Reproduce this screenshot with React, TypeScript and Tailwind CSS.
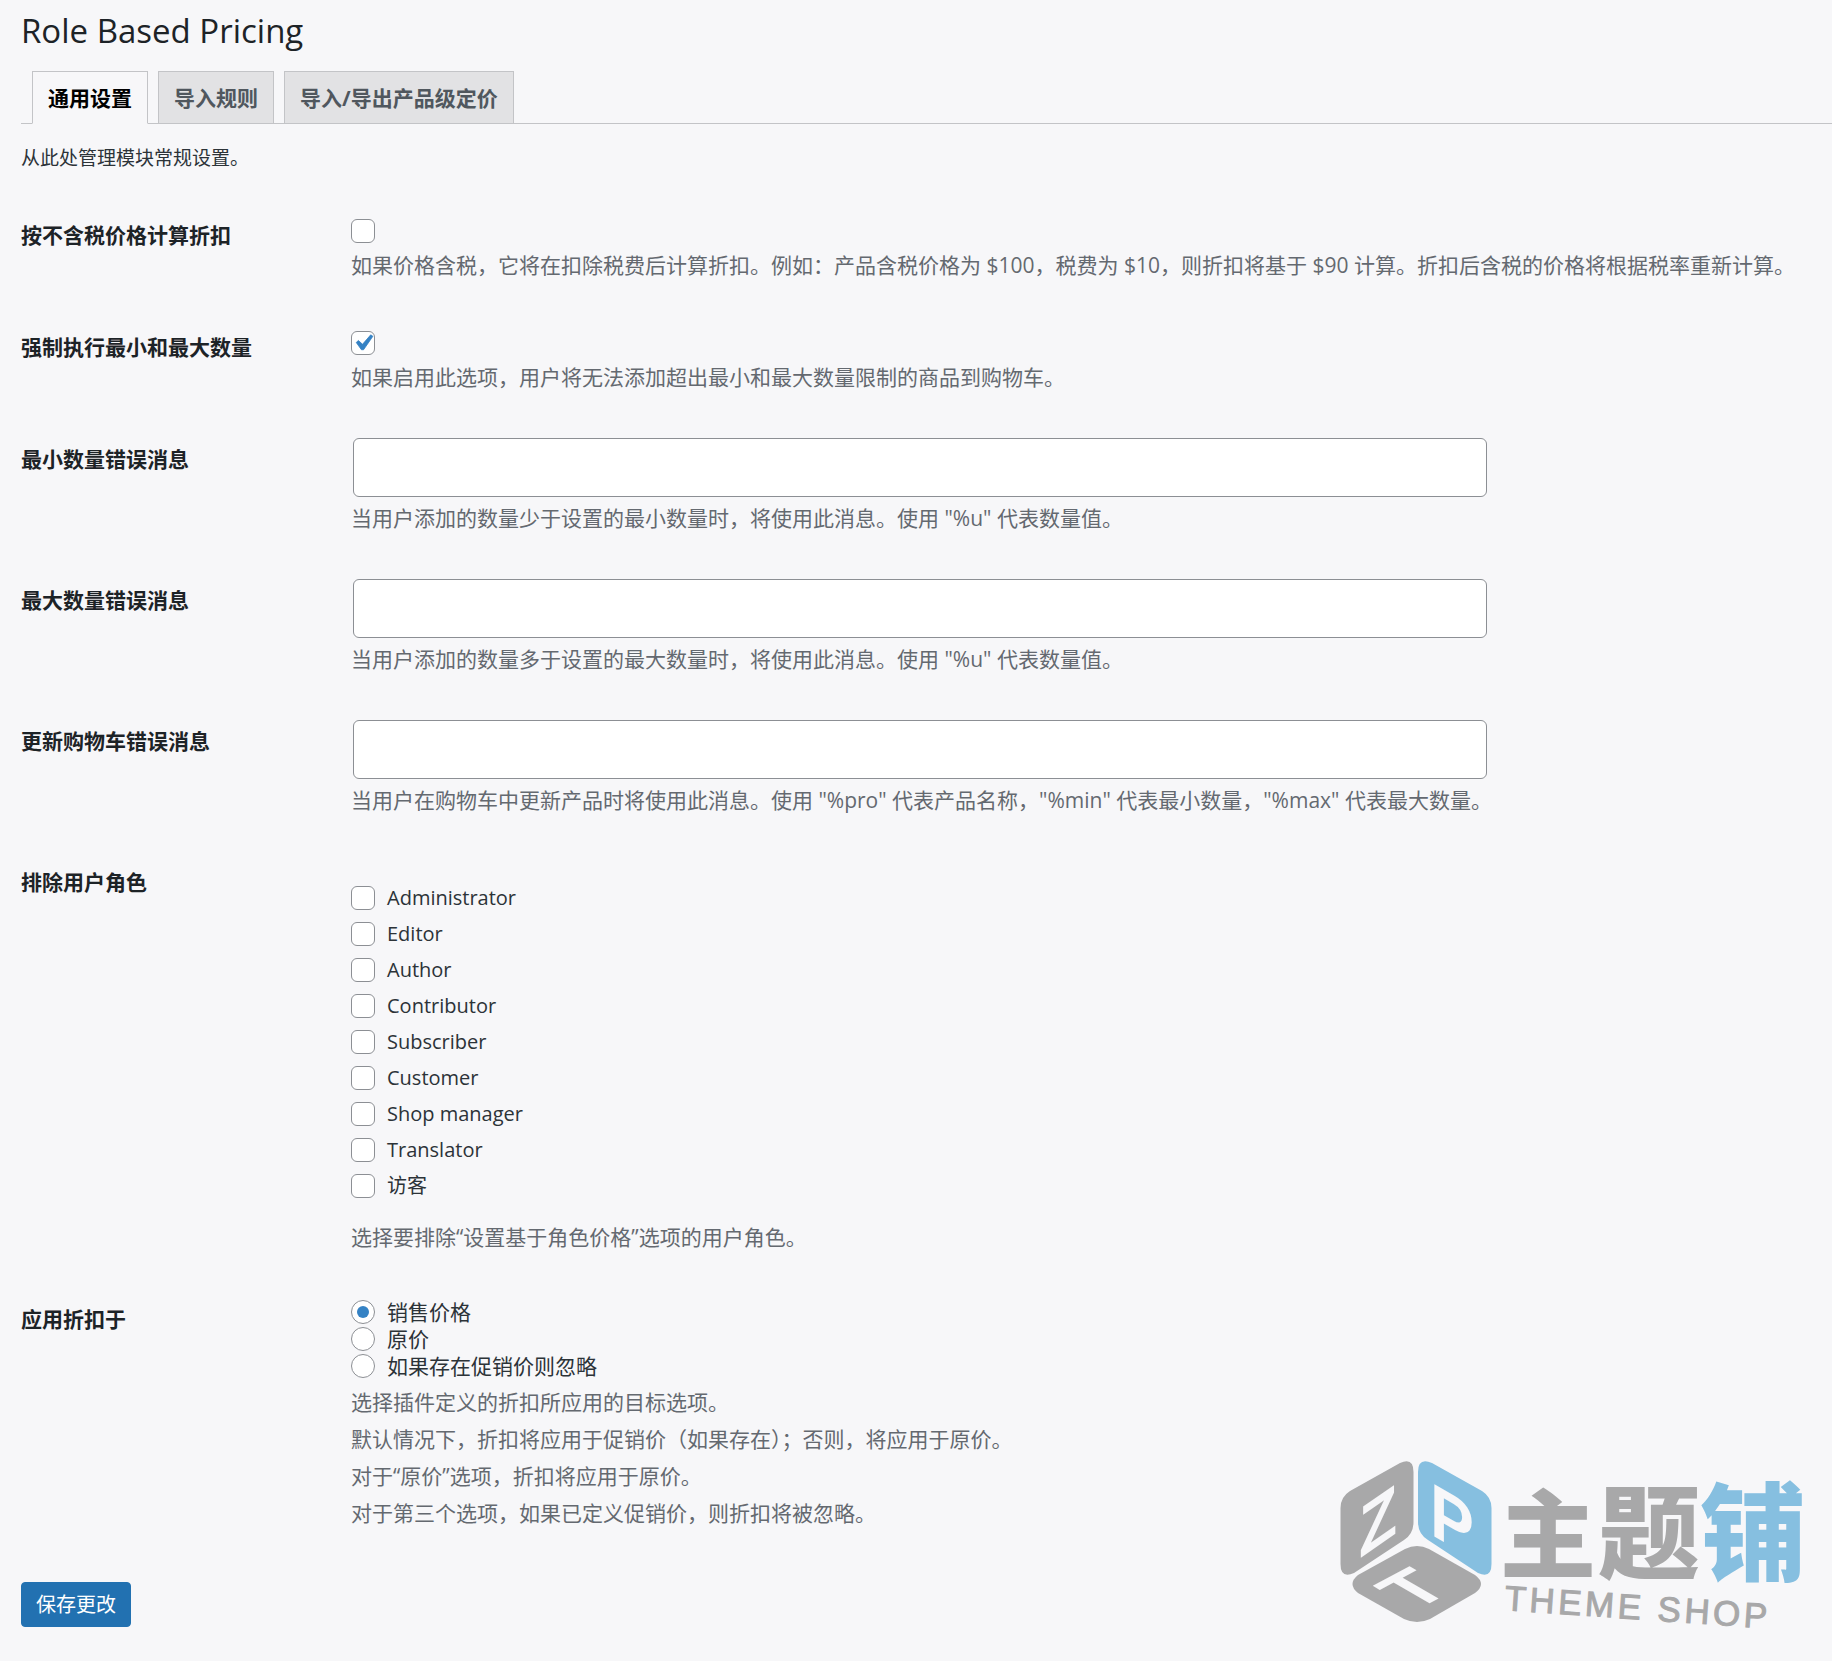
import { useState, type ReactNode } from 'react';

const tabs = ['通用设置', '导入规则', '导入/导出产品级定价'];

const roles = [
  'Administrator',
  'Editor',
  'Author',
  'Contributor',
  'Subscriber',
  'Customer',
  'Shop manager',
  'Translator',
  '访客',
];

const priceOptions = ['销售价格', '原价', '如果存在促销价则忽略'];

const messages = [
  {
    id: 'min-qty-message',
    label: '最小数量错误消息',
    help: '当用户添加的数量少于设置的最小数量时，将使用此消息。使用 "%u" 代表数量值。',
  },
  {
    id: 'max-qty-message',
    label: '最大数量错误消息',
    help: '当用户添加的数量多于设置的最大数量时，将使用此消息。使用 "%u" 代表数量值。',
  },
  {
    id: 'update-cart-message',
    label: '更新购物车错误消息',
    help: '当用户在购物车中更新产品时将使用此消息。使用 "%pro" 代表产品名称，"%min" 代表最小数量，"%max" 代表最大数量。',
  },
];

function Checkbox({ id, defaultChecked = false }: { id: string; defaultChecked?: boolean }) {
  return (
    <span className="relative block size-6 shrink-0">
      <input
        id={id}
        type="checkbox"
        defaultChecked={defaultChecked}
        className="peer block size-6 appearance-none rounded-md border border-[#8c8f94] bg-white"
      />
      <svg
        viewBox="0 0 20 20"
        className="pointer-events-none absolute -top-1 -left-1 hidden size-8 fill-[#3582c4] stroke-[#3582c4] peer-checked:block"
        strokeWidth="0.5"
      >
        <path d="M14.83 4.89l1.34.94-5.81 8.38H9.02L5.78 9.67l1.34-1.25 2.57 2.4z" />
      </svg>
    </span>
  );
}

function Help({ children }: { children: ReactNode }) {
  return <p className="text-[21px] leading-8 text-[#646970]">{children}</p>;
}

function Heading({ children }: { children: ReactNode }) {
  return <span className="block pt-[30px] text-[21px] leading-[27px] font-bold text-[#1d2327]">{children}</span>;
}

function Row({ label, htmlFor, children }: { label: string; htmlFor: string; children: ReactNode }) {
  return (
    <div className="grid grid-cols-[330px_1fr]">
      <label htmlFor={htmlFor}>
        <Heading>{label}</Heading>
      </label>
      <div>{children}</div>
    </div>
  );
}

function Watermark() {
  return (
    <svg
      viewBox="0 0 532 231"
      className="pointer-events-none absolute right-0 bottom-0 h-[231px] w-[532px] fill-[#a8a8a9]"
    >
      {/* Cube faces */}
      <path d="M100 33 Q113.500 27 113.500 42 V92 Q113.500 104 104 110 L54 143 Q40.500 149 40.500 134 V78 Q40.500 67 50 61 Z" />
      <path
        className="fill-[#86bfe0]"
        d="M132 33 Q118 27 118 42 V92 Q118 104 128 110 L178 143 Q191.500 149 191.500 134 V78 Q191.500 67 182 61 Z"
      />
      <path d="M105 119 Q117 113 129 119 L175 145 Q187 154 175 163 L130 189 Q117 195 104 189 L58 163 Q47 154 58 145 Z" />
      <g className="fill-[#f7f7f9] font-bold" fontFamily="Liberation Sans, sans-serif">
        <text fontSize="72" transform="matrix(0.866 -0.6 0 1 59 129)">Z</text>
        <text fontSize="76" transform="matrix(0.866 0.5 0 1 130 104)">P</text>
        <text fontSize="72" transform="matrix(0.866 -0.46 0.866 0.5 115 181)">T</text>
      </g>
      {/* Wordmark */}
      <g className="font-black" fontFamily="Noto Sans CJK SC, sans-serif">
        <text x="200" y="140" fontSize="96">主</text>
        <text x="298" y="141" fontSize="102">题</text>
        <text x="400" y="142" fontSize="106" className="fill-[#86bfe0]">铺</text>
      </g>
      <text
        fontSize="35"
        fontFamily="Liberation Sans, sans-serif"
        className="stroke-[#a8a8a9] tracking-widest"
        transform="translate(204 180) rotate(4)"
      >
        THEME SHOP
      </text>
    </svg>
  );
}

export default function App() {
  const [activeTab, setActiveTab] = useState(0);

  return (
    <main className="relative min-h-screen bg-[#f7f7f9] pb-[34px] pl-[21px] font-['Open_Sans','Noto_Sans_CJK_SC',sans-serif] text-[#2c3338]">
      <h1 className="pt-2 text-[33px] leading-[46px] text-[#1d2327]">Role Based Pricing</h1>

      {/* Tabs */}
      <nav className="mt-[17px] flex gap-[10px] border-b border-[#c3c4c7] pl-[11px]">
        {tabs.map((tab, i) => (
          <button
            key={tab}
            type="button"
            onClick={() => setActiveTab(i)}
            className={
              i === activeTab
                ? '-mb-px border border-[#c3c4c7] border-b-[#f7f7f9] bg-[#f7f7f9] px-[15px] pt-2 pb-[7px] text-[21px] leading-9 font-bold text-black'
                : '-mb-px border border-[#c3c4c7] bg-[#e2e2e4] px-[15px] pt-2 pb-[7px] text-[21px] leading-9 font-bold text-[#50575e]'
            }
          >
            {tab}
          </button>
        ))}
      </nav>

      <form>
        <p className="pt-[18px] pb-[18px] text-[19px] leading-8">从此处管理模块常规设置。</p>

        <Row label="按不含税价格计算折扣" htmlFor="exclude-tax">
          <div className="pt-[27px] pb-[23px]">
            <Checkbox id="exclude-tax" />
            <div className="pt-[6px]">
              <Help>
                如果价格含税，它将在扣除税费后计算折扣。例如：产品含税价格为 $100，税费为 $10，则折扣将基于 $90 计算。折扣后含税的价格将根据税率重新计算。
              </Help>
            </div>
          </div>
        </Row>

        <Row label="强制执行最小和最大数量" htmlFor="enforce-qty">
          <div className="pt-[27px] pb-[23px]">
            <Checkbox id="enforce-qty" defaultChecked />
            <div className="pt-[6px]">
              <Help>如果启用此选项，用户将无法添加超出最小和最大数量限制的商品到购物车。</Help>
            </div>
          </div>
        </Row>

        {messages.map((message) => (
          <Row key={message.id} label={message.label} htmlFor={message.id}>
            <div className="pt-[22px] pb-[23px]">
              <textarea
                id={message.id}
                rows={1}
                className="ml-0.5 block h-[59px] w-full max-w-[1134px] resize-none rounded-md border border-[#8c8f94] bg-white px-3 py-3 text-[21px]"
              />
              <div className="pt-[5px]">
                <Help>{message.help}</Help>
              </div>
            </div>
          </Row>
        ))}

        {/* Excluded roles */}
        <fieldset className="grid grid-cols-[330px_1fr]">
          <legend className="contents">
            <Heading>排除用户角色</Heading>
          </legend>
          <div className="pt-[47px] pb-[23px]">
            <div className="flex flex-col gap-3">
              {roles.map((role, i) => (
                <div key={role} className="flex h-6 items-center gap-3">
                  <Checkbox id={`role-${i}`} />
                  <label htmlFor={`role-${i}`} className="text-[20px] leading-7">
                    {role}
                  </label>
                </div>
              ))}
            </div>
            <div className="pt-[23px]">
              <Help>选择要排除“设置基于角色价格”选项的用户角色。</Help>
            </div>
          </div>
        </fieldset>

        {/* Discount target */}
        <fieldset className="grid grid-cols-[330px_1fr]">
          <legend className="contents">
            <Heading>应用折扣于</Heading>
          </legend>
          <div className="pt-6 pb-[23px]">
            <div className="flex flex-col gap-[3px]">
              {priceOptions.map((option, i) => (
                <div key={option} className="flex h-6 items-center gap-3">
                  <input
                    id={`price-${i}`}
                    type="radio"
                    name="price-type"
                    defaultChecked={i === 0}
                    className="grid size-6 shrink-0 appearance-none place-items-center rounded-full border border-[#8c8f94] bg-white before:size-3 before:rounded-full checked:before:bg-[#3582c4]"
                  />
                  <label htmlFor={`price-${i}`} className="text-[21px] leading-7">
                    {option}
                  </label>
                </div>
              ))}
            </div>
            <div className="flex flex-col gap-[5px] pt-2">
              <Help>选择插件定义的折扣所应用的目标选项。</Help>
              <Help>默认情况下，折扣将应用于促销价（如果存在）；否则，将应用于原价。</Help>
              <Help>对于“原价”选项，折扣将应用于原价。</Help>
              <Help>对于第三个选项，如果已定义促销价，则折扣将被忽略。</Help>
            </div>
          </div>
        </fieldset>

        <button
          type="submit"
          className="mt-[30px] block h-[45px] rounded border border-[#2271b1] bg-[#2271b1] px-[14px] text-[20px] text-white"
        >
          保存更改
        </button>
      </form>

      <Watermark />
    </main>
  );
}
